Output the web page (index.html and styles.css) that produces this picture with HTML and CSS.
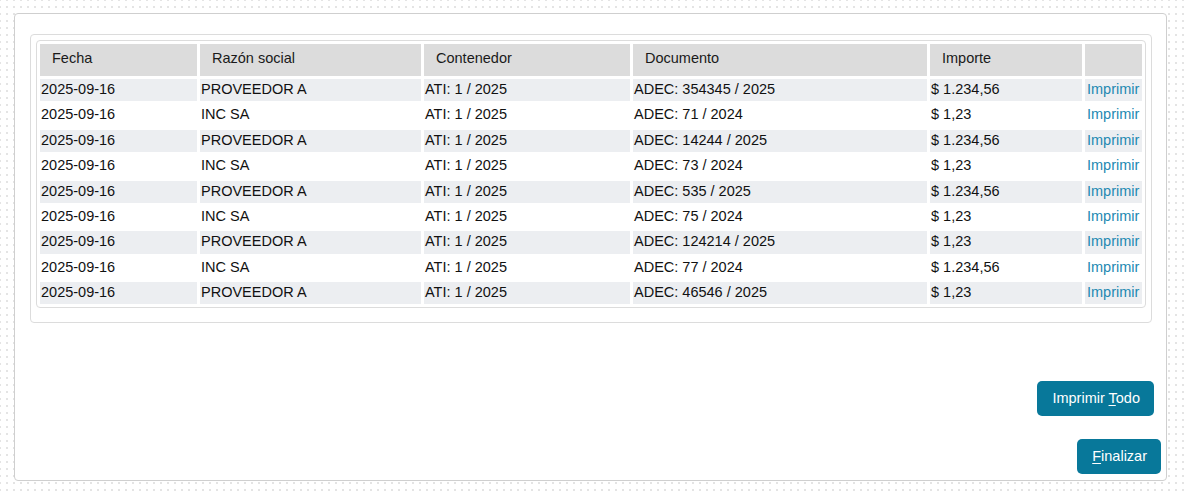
FILE: index.html
```html
<!DOCTYPE html>
<html lang="es">
<head>
    <meta charset="UTF-8">
    <meta name="viewport" content="width=device-width, initial-scale=1.0">
    <title>Impresión de documentos</title>
    <link rel="stylesheet" href="styles.css">
</head>
<body>
    <div class="panel">
        <div class="box">
            <div class="table-wrap">
                <table class="grid">
                    <colgroup>
                        <col class="c-fecha">
                        <col class="c-razon">
                        <col class="c-cont">
                        <col class="c-doc">
                        <col class="c-imp">
                        <col class="c-acc">
                    </colgroup>
                    <thead>
                        <tr>
                            <th>Fecha</th>
                            <th>Razón social</th>
                            <th>Contenedor</th>
                            <th>Documento</th>
                            <th>Importe</th>
                            <th></th>
                        </tr>
                    </thead>
                    <tbody>
                        <tr><td>2025-09-16</td><td>PROVEEDOR A</td><td>ATI: 1 / 2025</td><td>ADEC: 354345 / 2025</td><td>$ 1.234,56</td><td><a href="#">Imprimir</a></td></tr>
                        <tr><td>2025-09-16</td><td>INC SA</td><td>ATI: 1 / 2025</td><td>ADEC: 71 / 2024</td><td>$ 1,23</td><td><a href="#">Imprimir</a></td></tr>
                        <tr><td>2025-09-16</td><td>PROVEEDOR A</td><td>ATI: 1 / 2025</td><td>ADEC: 14244 / 2025</td><td>$ 1.234,56</td><td><a href="#">Imprimir</a></td></tr>
                        <tr><td>2025-09-16</td><td>INC SA</td><td>ATI: 1 / 2025</td><td>ADEC: 73 / 2024</td><td>$ 1,23</td><td><a href="#">Imprimir</a></td></tr>
                        <tr><td>2025-09-16</td><td>PROVEEDOR A</td><td>ATI: 1 / 2025</td><td>ADEC: 535 / 2025</td><td>$ 1.234,56</td><td><a href="#">Imprimir</a></td></tr>
                        <tr><td>2025-09-16</td><td>INC SA</td><td>ATI: 1 / 2025</td><td>ADEC: 75 / 2024</td><td>$ 1,23</td><td><a href="#">Imprimir</a></td></tr>
                        <tr><td>2025-09-16</td><td>PROVEEDOR A</td><td>ATI: 1 / 2025</td><td>ADEC: 124214 / 2025</td><td>$ 1,23</td><td><a href="#">Imprimir</a></td></tr>
                        <tr><td>2025-09-16</td><td>INC SA</td><td>ATI: 1 / 2025</td><td>ADEC: 77 / 2024</td><td>$ 1.234,56</td><td><a href="#">Imprimir</a></td></tr>
                        <tr><td>2025-09-16</td><td>PROVEEDOR A</td><td>ATI: 1 / 2025</td><td>ADEC: 46546 / 2025</td><td>$ 1,23</td><td><a href="#">Imprimir</a></td></tr>
                    </tbody>
                </table>
            </div>
        </div>

        <div class="actions">
            <button class="btn btn-todo" accesskey="t">Imprimir <u>T</u>odo</button>
            <button class="btn btn-fin" accesskey="f"><u>F</u>inalizar</button>
        </div>
    </div>
</body>
</html>
```

FILE: styles.css
```css
* {
    box-sizing: border-box;
    margin: 0;
    padding: 0;
}

body {
    padding: 13px 0 0 14px;
    height: 494px;
    overflow: hidden;
    font-family: "Liberation Sans", Arial, sans-serif;
    font-size: 14.5px;
    color: #111;
    background-color: #fff;
    background-image:
        linear-gradient(90deg, #fff 5px, transparent 5px),
        linear-gradient(#fff 5px, #e4e4e4 5px);
    background-size: 7px 7px;
    background-position: 1px 1px;
}

.panel {
    width: 1153px;
    height: 468px;
    padding: 20px 0 0 15px;
    background: #fff;
    border: 1px solid #cfcfcf;
    border-radius: 4px;
}

.box {
    width: 1122px;
    padding: 5px 5px 14px 5px;
    border: 1px solid #dcdcdc;
    border-radius: 4px;
}

.table-wrap {
    border: 1px solid #dcdcdc;
    border-radius: 4px;
}

.grid {
    width: 1108px;
    table-layout: fixed;
    border-collapse: separate;
    border-spacing: 3px;
}

.c-fecha { width: 157px; }
.c-razon { width: 221px; }
.c-cont { width: 206px; }
.c-doc { width: 294px; }
.c-imp { width: 152px; }
.c-acc { width: 57px; }

.grid th {
    background: #dcdcdc;
    font-weight: normal;
    text-align: left;
    color: #1a1a1a;
    padding: 6px 12px 10px;
    line-height: 16px;
    height: 32px;
}

.grid td {
    padding: 2px 1px 4px;
    line-height: 16.375px;
    white-space: nowrap;
    overflow: hidden;
}

.grid tbody tr:nth-child(odd) td {
    background: #eceef1;
}

.grid td:last-child {
    padding-left: 2px;
}

.grid a {
    color: #2389b2;
    text-decoration: none;
}

.actions {
    display: flex;
    flex-direction: column;
    align-items: flex-end;
    margin-top: 58px;
}

.btn {
    font-family: "Liberation Sans", Arial, sans-serif;
    font-size: 14.5px;
    line-height: 17px;
    color: #fff;
    background: #08789a;
    border: none;
    border-radius: 5px;
    padding: 9px 14px;
    cursor: pointer;
}

.btn u {
    text-underline-offset: 2px;
}

.btn-todo {
    margin-right: 12px;
    padding-left: 15px;
}

.btn-fin {
    margin-top: 23px;
    margin-right: 5px;
    padding-left: 15px;
}
```
